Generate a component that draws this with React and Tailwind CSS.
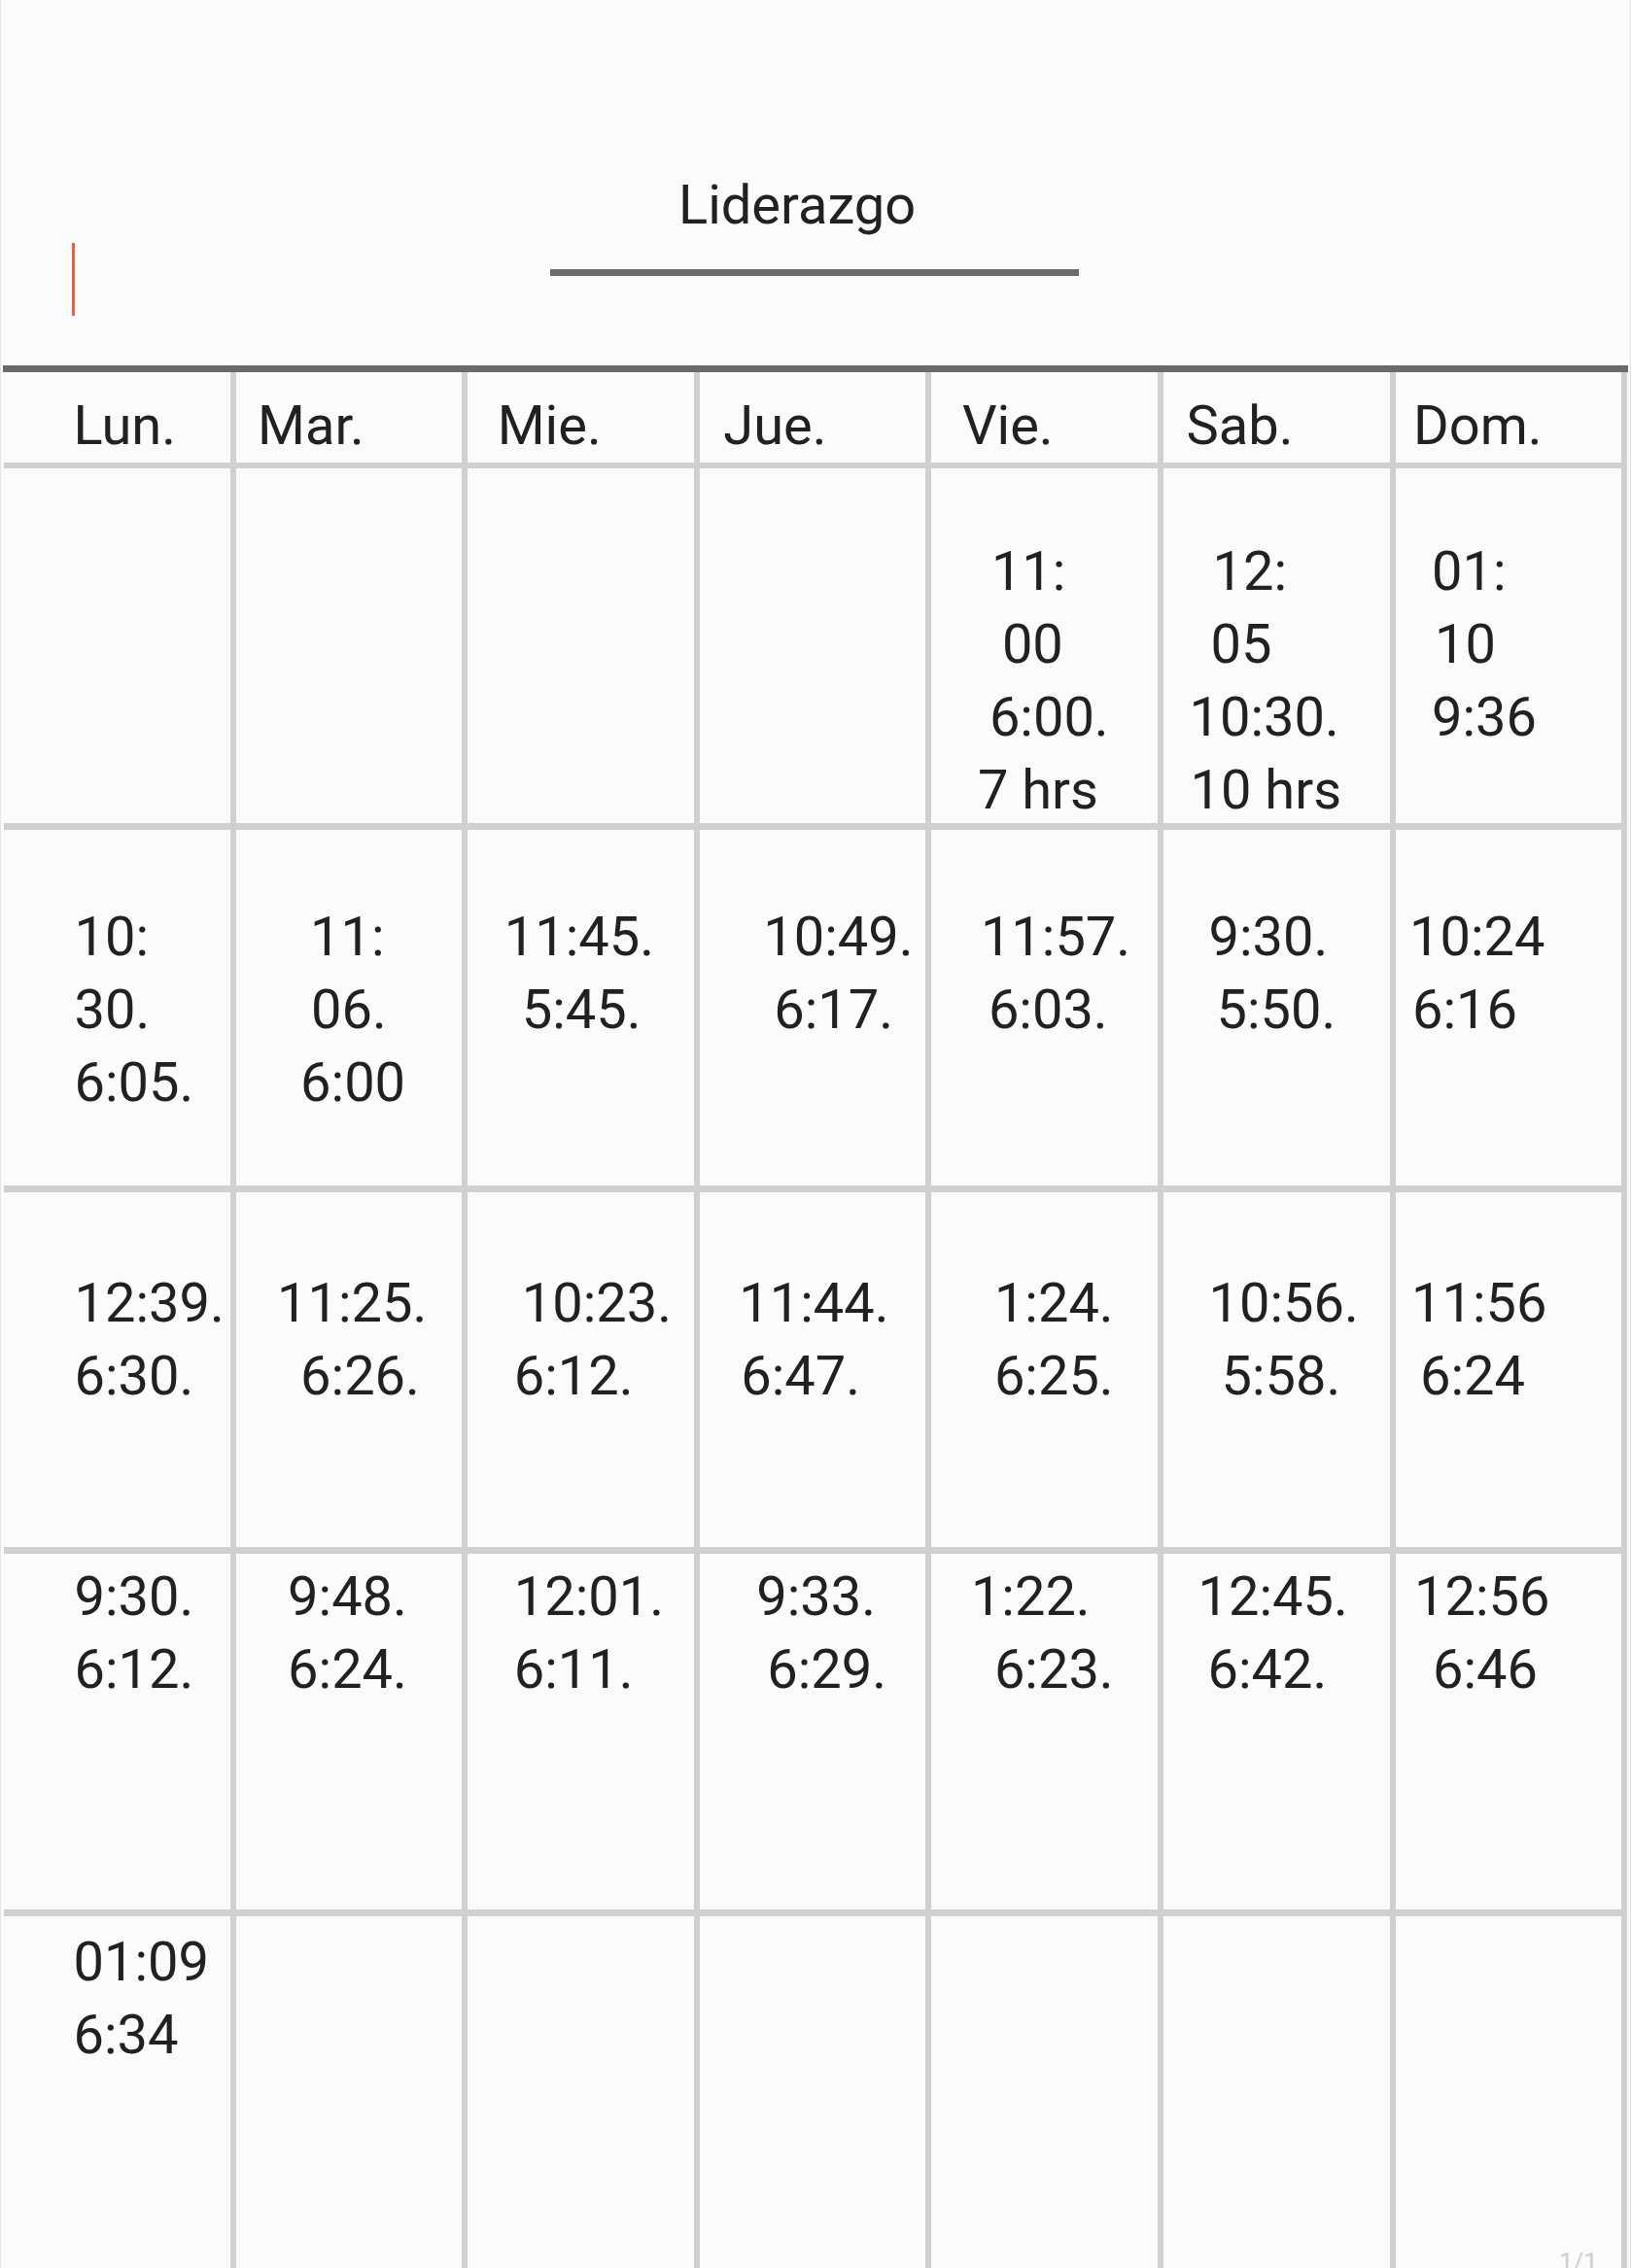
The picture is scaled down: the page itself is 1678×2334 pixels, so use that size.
import React from "react";

const header = [
  [70, "Lun."],
  [21, "Mar."],
  [29, "Mie."],
  [23, "Jue."],
  [30, "Vie."],
  [22, "Sab."],
  [17, "Dom."],
];

const rows = [
  {
    h: "h-[372px]",
    pt: "pt-[69px]",
    cells: [
      [],
      [],
      [],
      [],
      [[60, "11:"], [71, "00"], [58, "6:00."], [46, "7 hrs"]],
      [[49, "12:"], [47, "05"], [25, "10:30."], [26, "10 hrs"]],
      [[36, "01:"], [39, "10"], [36, "9:36"]],
    ],
  },
  {
    h: "h-[373px]",
    pt: "pt-[73px]",
    cells: [
      [[71, "10:"], [71, "30."], [71, "6:05."]],
      [[75, "11:"], [76, "06."], [65, "6:00"]],
      [[36, "11:45."], [54, "5:45."]],
      [[64, "10:49."], [75, "6:17."]],
      [[49, "11:57."], [57, "6:03."]],
      [[45, "9:30."], [53, "5:50."]],
      [[13, "10:24"], [16, "6:16"]],
    ],
  },
  {
    h: "h-[372px]",
    pt: "pt-[77px]",
    cells: [
      [[71, "12:39."], [71, "6:30."]],
      [[41, "11:25."], [65, "6:26."]],
      [[54, "10:23."], [46, "6:12."]],
      [[39, "11:44."], [41, "6:47."]],
      [[63, "1:24."], [63, "6:25."]],
      [[45, "10:56."], [58, "5:58."]],
      [[15, "11:56"], [24, "6:24"]],
    ],
  },
  {
    h: "h-[373px]",
    pt: "pt-[7px]",
    cells: [
      [[71, "9:30."], [71, "6:12."]],
      [[52, "9:48."], [52, "6:24."]],
      [[46, "12:01."], [46, "6:11."]],
      [[57, "9:33."], [68, "6:29."]],
      [[39, "1:22."], [63, "6:23."]],
      [[34, "12:45."], [44, "6:42."]],
      [[18, "12:56"], [37, "6:46"]],
    ],
  },
  {
    h: "h-[362px]",
    pt: "pt-[10px]",
    last: true,
    cells: [[[70, "01:09"], [70, "6:34"]], [], [], [], [], [], []],
  },
];

function Line({ off, text }) {
  return (
    <div className="whitespace-pre" style={{ marginLeft: off + 1.5 }}>
      {text}
    </div>
  );
}

export default function App() {
  return (
    <div
      className="relative w-[1678px] h-[2334px] overflow-hidden bg-[#fbfbfb] text-[#212121] border-l border-r border-[#e4e4e4]"
      style={{ fontFamily: "Roboto, 'Noto Sans', sans-serif" }}
    >
      {/* Title */}
      <div className="pt-[174px] pl-[697px] text-[56px] leading-[75px]">Liderazgo</div>
      <div className="flex items-start h-[76px]">
        <div className="ml-[73px] mt-[1px] w-[3px] h-[75px] bg-[#e8643c]" />
        <div className="ml-[489px] mt-[28px] w-[544px] h-[7px] bg-[#6b6b6b]" />
      </div>

      {/* Table */}
      <div className="mt-[51px] ml-[2px] w-[1672px]">
        <div className="h-[7px] bg-[#6a6a6a]" />
        <div className="ml-[1px] grid grid-cols-[repeat(7,238.6px)] text-[56px] leading-[75px]">
          {header.map(([off, t], i) => (
            <div
              key={"h" + i}
              className="h-[99px] pt-[18px] border-r-[6px] border-b-[6px] border-[#d0d0d0]"
            >
              <Line off={off} text={t} />
            </div>
          ))}
          {rows.map((r, ri) =>
            r.cells.map((c, ci) => (
              <div
                key={ri + "-" + ci}
                className={
                  r.h +
                  " " +
                  r.pt +
                  " border-r-[6px] border-[#d0d0d0] " +
                  (r.last ? "" : "border-b-[7px]")
                }
              >
                {c.map(([off, t], li) => (
                  <Line key={li} off={off} text={t} />
                ))}
              </div>
            ))
          )}
        </div>
      </div>

      {/* page indicator */}
      <div className="absolute left-[1603px] top-[2313px] text-[26px] leading-[30px] text-[#cfcfcf]">
        1/1
      </div>
    </div>
  );
}
